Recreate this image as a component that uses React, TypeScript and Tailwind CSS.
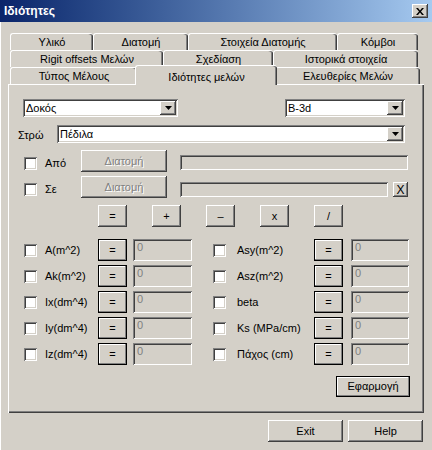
import React from 'react';

const raised =
  'bg-[#d4d0c8] shadow-[inset_-1px_-1px_0_#404040,inset_1px_1px_0_#ffffff,inset_-2px_-2px_0_#808080,inset_2px_2px_0_#d4d0c8]';
const framed =
  'bg-[#d4d0c8] border border-black shadow-[inset_-1px_-1px_0_#808080,inset_1px_1px_0_#ffffff]';
const sunken =
  'shadow-[inset_1px_1px_0_#808080,inset_-1px_-1px_0_#ffffff,inset_2px_2px_0_#404040,inset_-2px_-2px_0_#d4d0c8]';

function Btn({
  children,
  className = '',
  disabled = false,
  def = false,
}: {
  children: React.ReactNode;
  className?: string;
  disabled?: boolean;
  def?: boolean;
}) {
  return (
    <div
      className={`flex shrink-0 items-center justify-center leading-none ${def ? framed : raised} ${
        disabled ? 'text-[#808080] [text-shadow:1px_1px_0_#ffffff]' : 'text-black'
      } ${className}`}
    >
      {children}
    </div>
  );
}

function Arrow() {
  return (
    <svg width="7" height="4" viewBox="0 0 7 4">
      <polygon points="0,0 7,0 3.5,4" fill="#000" />
    </svg>
  );
}

function Combo({ value, className = '' }: { value: string; className?: string }) {
  return (
    <div className={`flex shrink-0 items-stretch bg-white p-[2px] ${sunken} ${className}`}>
      <span className="flex flex-1 items-center pl-[1px] leading-none">{value}</span>
      <div className={`flex w-[16px] items-center justify-center ${raised}`}>
        <Arrow />
      </div>
    </div>
  );
}

function Check({ className = '' }: { className?: string }) {
  return <div className={`h-[13px] w-[13px] shrink-0 bg-white ${sunken} ${className}`} />;
}

function Field({ className = '' }: { className?: string }) {
  return (
    <div className={`h-[22px] shrink-0 bg-[#d4d0c8] pl-[4px] pt-[3px] leading-none text-[#808080] ${sunken} ${className}`}>
      0
    </div>
  );
}

function Tab({ label, w, active = false }: { label: string; w: string; active?: boolean }) {
  if (active) {
    return (
      <div
        className={`relative z-10 -mx-[2px] -mt-[2px] flex h-[20px] shrink-0 items-start justify-center rounded-t-[3px] border-l border-t border-white bg-[#d4d0c8] pt-[3px] shadow-[inset_-1px_0_0_#404040,inset_-2px_0_0_#808080] ${w}`}
      >
        {label}
      </div>
    );
  }
  return (
    <div
      className={`flex h-[17px] shrink-0 items-center justify-center rounded-t-[3px] border-l border-t border-white pt-[1px] shadow-[inset_-1px_0_0_#404040,inset_-2px_0_0_#808080] ${w}`}
    >
      {label}
    </div>
  );
}

const leftProps = ['A(m^2)', 'Ak(m^2)', 'Ix(dm^4)', 'Iy(dm^4)', 'Iz(dm^4)'];
const rightProps = ['Asy(m^2)', 'Asz(m^2)', 'beta', 'Ks (MPa/cm)', 'Πάχος (cm)'];

export default function App() {
  return (
    <div className="relative h-[450px] w-[432px] overflow-hidden bg-[#d4d0c8] text-[11px] text-black shadow-[inset_1px_0_0_#ffffff] [font-family:'Liberation_Sans',Arial,sans-serif]">
      {/* title bar */}
      <div className="flex h-[22px] items-center bg-gradient-to-r from-[#0a246a] to-[#a6caf0] pl-[4px] pr-[4px]">
        <span className="flex-1 text-[12px] font-bold text-white">Ιδιότητες</span>
        <div className={`flex h-[14px] w-[16px] items-center justify-center ${raised}`}>
          <svg width="8" height="7" viewBox="0 0 8 7">
            <path d="M0 0h2l2 2.5L6 0h2L5 3.5 8 7H6L4 4.5 2 7H0l3-3.5z" fill="#000" />
          </svg>
        </div>
      </div>

      {/* tabs */}
      <div className="ml-[10px] mt-[11px] flex flex-col">
        <div className="flex h-[17px]">
          <Tab label="Υλικό" w="w-[83px]" />
          <Tab label="Διατομή" w="w-[95px]" />
          <Tab label="Στοιχεία Διατομής" w="w-[149px]" />
          <Tab label="Κόμβοι" w="w-[81px]" />
        </div>
        <div className="flex h-[17px]">
          <Tab label="Rigit offsets Μελών" w="w-[153px]" />
          <Tab label="Σχεδίαση" w="w-[110px]" />
          <Tab label="Ιστορικά στοιχεία" w="w-[145px]" />
        </div>
        <div className="flex h-[17px] items-start">
          <Tab label="Τύπος Μέλους" w="w-[127px]" />
          <Tab label="Ιδιότητες μελών" w="w-[142px]" active />
          <Tab label="Ελευθερίες Μελών" w="w-[145px]" />
        </div>
      </div>

      {/* panel */}
      <div className="ml-[8px] flex h-[329px] w-[416px] flex-col border-l border-t border-white pt-[14px] shadow-[inset_-1px_-1px_0_#404040,inset_-2px_-2px_0_#808080]">
        <div className="flex h-[18px]">
          <Combo value="Δοκός" className="ml-[14px] w-[155px]" />
          <Combo value="B-3d" className="ml-[107px] w-[120px]" />
        </div>

        <div className="mt-[8px] flex h-[18px] items-center">
          <span className="ml-[9px] mt-[2px] w-[39px]">Στρώ</span>
          <Combo value="Πέδιλα" className="h-[18px] w-[348px]" />
        </div>

        <div className="mt-[7px] flex h-[22px] items-center">
          <Check className="ml-[15px] mt-[4px]" />
          <span className="ml-[8px] mt-[4px] w-[36px]">Από</span>
          <Btn disabled className="h-[22px] w-[86px]">Διατομή</Btn>
          <div className={`ml-[13px] mt-[3px] h-[15px] w-[228px] ${sunken}`} />
        </div>

        <div className="mt-[4px] flex h-[22px] items-center">
          <Check className="ml-[15px] mt-[4px]" />
          <span className="ml-[8px] mt-[4px] w-[36px]">Σε</span>
          <Btn disabled className="h-[22px] w-[86px]">Διατομή</Btn>
          <div className={`ml-[13px] mt-[5px] h-[15px] w-[208px] ${sunken}`} />
          <Btn className="ml-[5px] mt-[5px] h-[15px] w-[15px] text-[12px]">X</Btn>
        </div>

        <div className="ml-[89px] mt-[7px] flex h-[22px] gap-[25px]">
          {['=', '+', '–', 'x', '/'].map((s) => (
            <Btn key={s} className="h-[22px] w-[29px]">
              {s}
            </Btn>
          ))}
        </div>

        <div className="mt-[12px] flex flex-col gap-[4px]">
          {leftProps.map((l, i) => (
            <div key={l} className="flex h-[22px] items-center">
              <Check className="ml-[15px]" />
              <span className="ml-[8px] w-[53px]">{l}</span>
              <Btn def className="h-[22px] w-[29px]">=</Btn>
              <Field className="ml-[6px] w-[59px]" />
              <Check className="ml-[21px]" />
              <span className="ml-[11px] w-[77px]">{rightProps[i]}</span>
              <Btn def className="h-[22px] w-[29px]">=</Btn>
              <Field className="ml-[8px] w-[58px]" />
            </div>
          ))}
        </div>

        <div className="mt-[11px] flex justify-end pr-[14px]">
          <Btn def className="h-[21px] w-[74px]">Εφαρμογή</Btn>
        </div>
      </div>

      {/* bottom buttons */}
      <div className="mt-[7px] flex justify-end gap-[5px] pr-[9px]">
        <Btn className="h-[22px] w-[75px]">Exit</Btn>
        <Btn className="h-[22px] w-[75px]">Help</Btn>
      </div>
    </div>
  );
}
